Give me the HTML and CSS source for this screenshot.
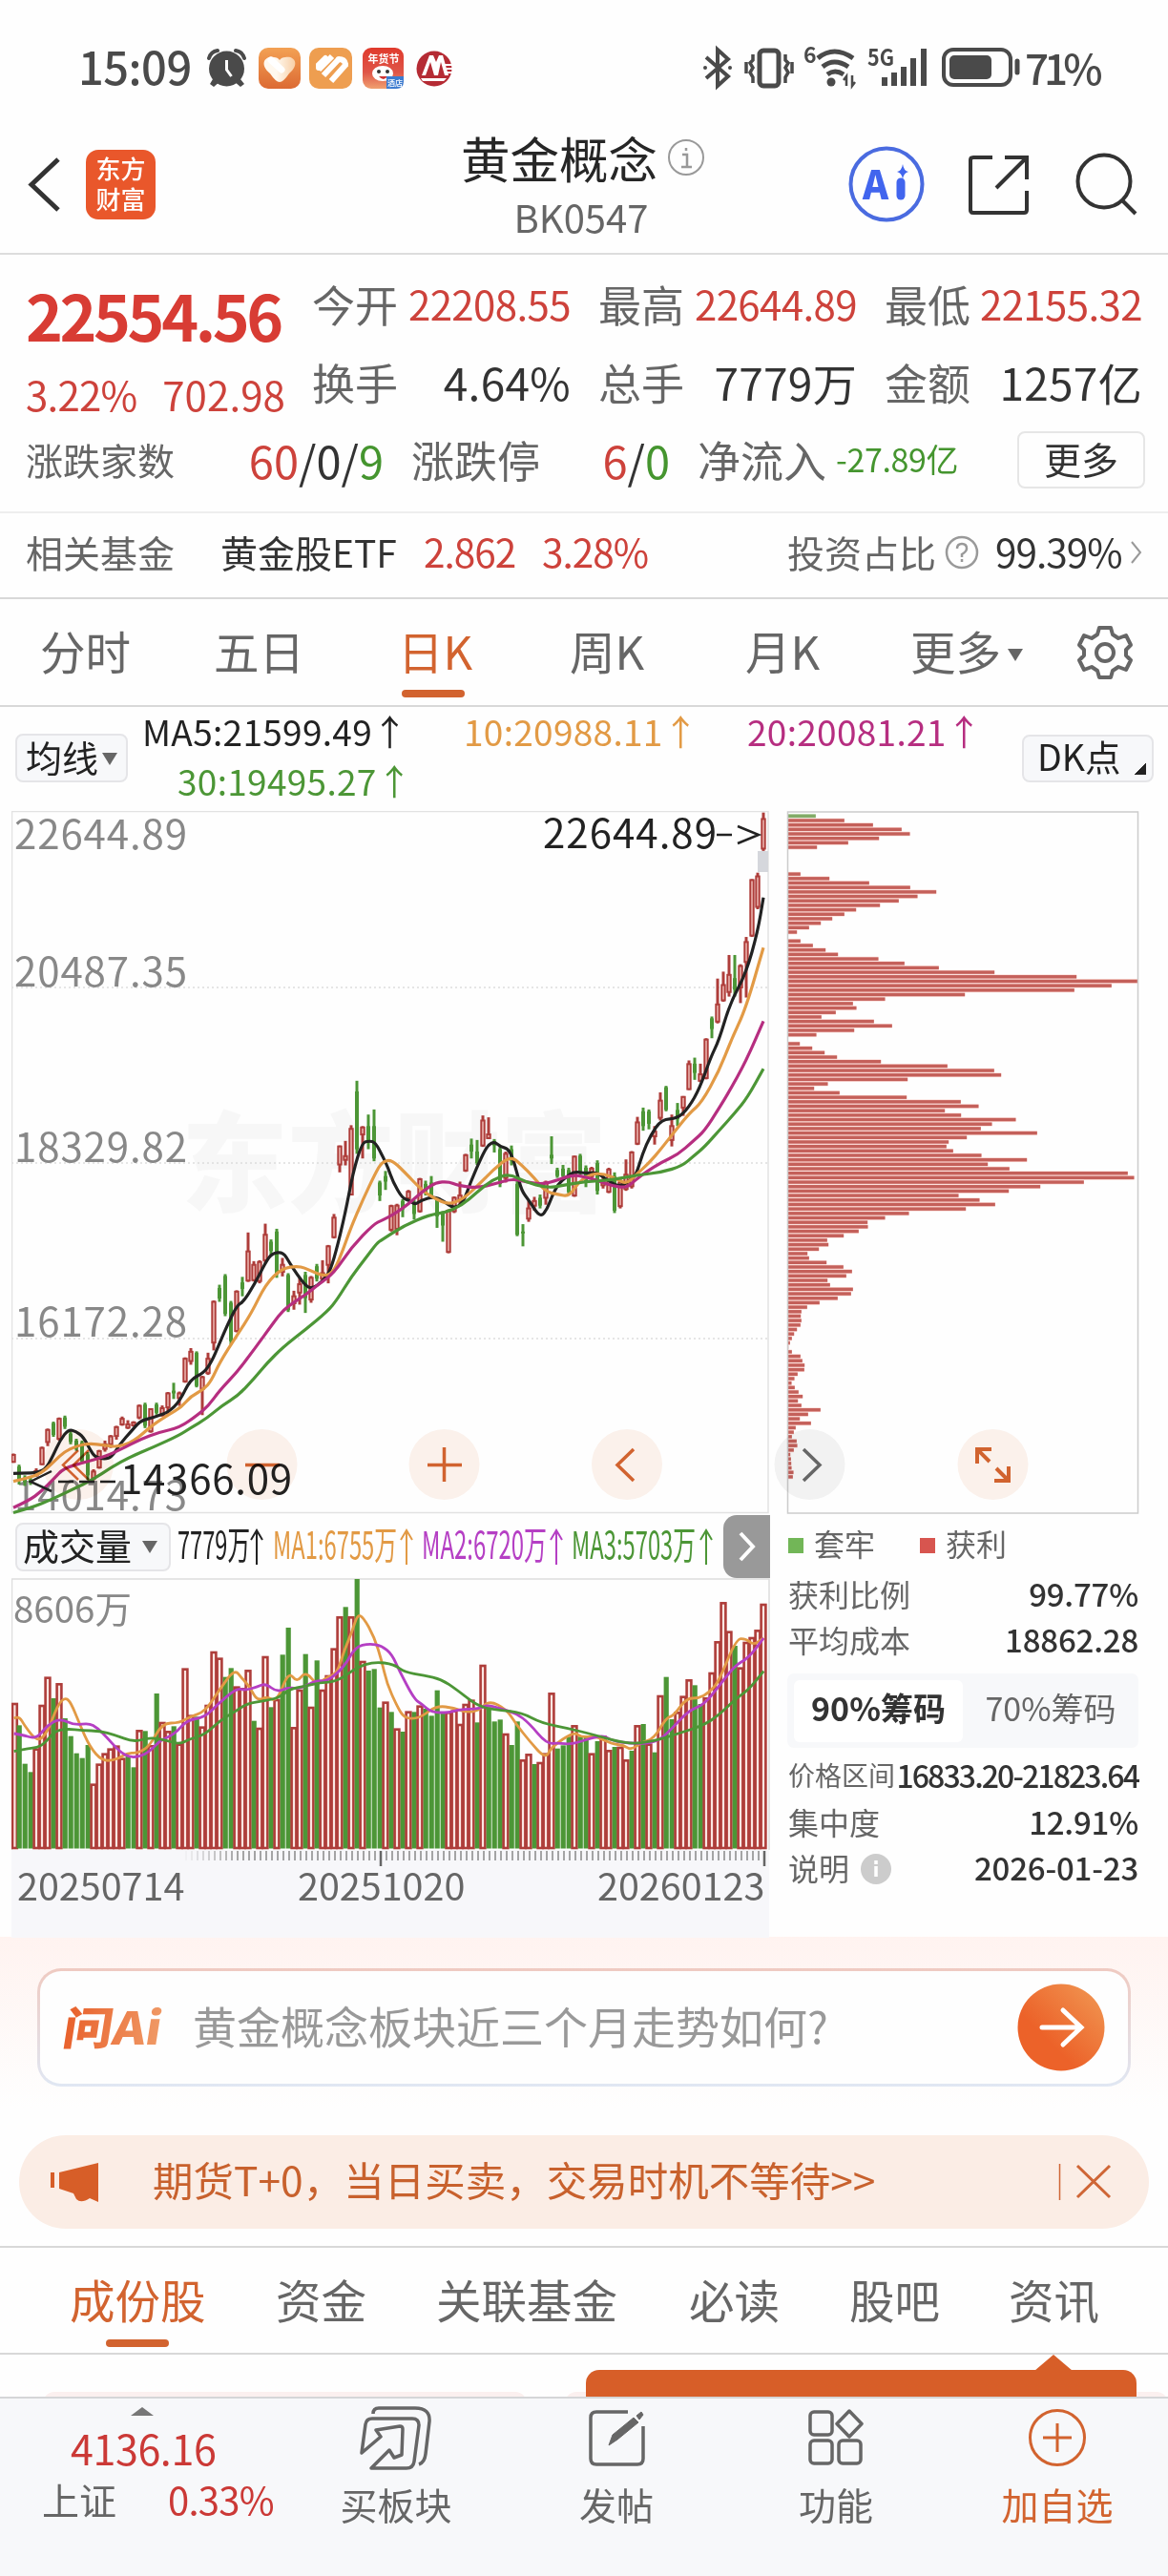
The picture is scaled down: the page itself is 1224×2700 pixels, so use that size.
FILE: index.html
```html
<!DOCTYPE html>
<html lang="zh-CN">
<head>
<meta charset="utf-8">
<title>黄金概念 BK0547</title>
<link rel="stylesheet" href="styles.css">
</head>
<body>
<header class="status">
  <span class="clock">15:09</span>
  <svg class="status-apps" width="262" height="50" viewBox="214 47 262 50">
    <defs>
      <linearGradient id="appA" x1="0" y1="0" x2="0" y2="1"><stop offset="0" stop-color="#f3a154"/><stop offset="1" stop-color="#dc6a33"/></linearGradient>
      <linearGradient id="heart" x1="0" y1="0" x2="1" y2="0"><stop offset=".4" stop-color="#fff8ee"/><stop offset="1" stop-color="#f8cfa6"/></linearGradient>
      <linearGradient id="appC" x1="0" y1="0" x2="0" y2="1"><stop offset="0" stop-color="#e03a2c"/><stop offset=".6" stop-color="#df5548"/><stop offset="1" stop-color="#f0a070"/></linearGradient>
    </defs>
    <g fill="#4a4a4a"><circle cx="237.500" cy="72" r="18.500"/><path d="M223 83l-3 5 4 3 7-6zM252 83l4 5-4 3-7-6z"/></g>
    <path d="M219 61q2-7 9-8M256 61q-2-7-9-8" fill="none" stroke="#4a4a4a" stroke-width="4" stroke-linecap="round"/>
    <path d="M237.500 63v10l5 7" fill="none" stroke="#fff" stroke-width="3"/>
    <rect x="271" y="50" width="44" height="43" rx="10" fill="url(#appA)"/>
    <path d="M293 86q-4 0-10-9c-12-10-5-19 4-17q4 0 6 3q2-3 6-3c9-2 16 7 4 17q-6 9-10 9z" fill="url(#heart)"/>
    <path d="M284 63l11 10" stroke="#fff" stroke-width="7" stroke-linecap="round"/>
    <rect x="324" y="50" width="45" height="43" rx="10" fill="#ee9e50"/>
    <g fill="none" stroke="#fff" stroke-width="6"><path d="M334 73l14-14M339 79l16-17M347 85l16-18"/><path d="M334 71v-3l7-7M355 62q6 0 7 5" stroke-linecap="round"/></g>
    <rect x="380" y="50" width="43" height="43" rx="9" fill="url(#appC)"/>
    <text x="402" y="66" font-size="11" font-weight="700" fill="#fff" text-anchor="middle">年货节</text>
    <ellipse cx="401" cy="77" rx="11" ry="8" fill="#fff"/><circle cx="397" cy="75" r="2" fill="#333"/><circle cx="406" cy="75" r="2" fill="#333"/><path d="M397 80q5 6 9 0z" fill="#c33"/>
    <path d="M405 80h18v5q0 8-8 8h-10z" fill="#3c7bd0"/><text x="414" y="90" font-size="8" fill="#fff" text-anchor="middle">酒店</text>
    <circle cx="455" cy="72" r="18.500" fill="#b52b34"/><path d="M442 79l8-21h4l3 7 3-7h4l6 21h-4l-4-14-3 14h-4l-4-14-5 14zM441 82h27l-3 3h-22zM466 67h8v2h-8zM468 71h6v2h-6zM469 75h5v2h-5z" fill="#fff"/>
  </svg>
  <svg class="status-sys" width="340" height="54" viewBox="732 45 340 54" fill="none" stroke="#4a4a4a" stroke-width="4">
    <path d="M740 60l23 20-11 10V52l11 10-23 20"/><circle cx="739" cy="71" r="2" fill="#4a4a4a" stroke="none"/><circle cx="765" cy="71" r="2" fill="#4a4a4a" stroke="none"/>
    <rect x="796" y="53" width="20" height="37" rx="4" stroke-width="5"/><path d="M789 57v6l-3 3 3 5-3 5 3 5v6M823 57v6l3 3-3 5 3 5-3 5v6M782 65v12M830 65v12" stroke-width="3.500"/>
    <path d="M857 61q17-14 37 0M862 70q12-10 27 0M867 78q8-6 17 0" stroke-width="5"/><circle cx="871" cy="86" r="4.500" fill="#4a4a4a" stroke="none"/>
    <path d="M887 90V80l-3 4M893 79v11l3-4" stroke-width="2.500"/>
    <text x="842" y="66" font-size="23" font-weight="700" fill="#4a4a4a" stroke="none">6</text>
    <text x="909" y="69" font-size="24" font-weight="700" fill="#4a4a4a" stroke="none" textLength="28" lengthAdjust="spacingAndGlyphs">5G</text>
    <path d="M927 90v-9M937 90V76M947 90V70M957 90V61M968 90V51" stroke-width="6"/>
    <rect x="989" y="52" width="70" height="37" rx="10" stroke-width="4"/><rect x="995" y="58" width="44" height="25" rx="5" fill="#4a4a4a" stroke="none"/><path d="M1066 64v12" stroke-width="5" stroke-linecap="round"/>
  </svg>
  <span class="battery">71%</span>
</header>

<nav class="head">
  <svg class="back" width="36" height="60" viewBox="28 164 36 60"><path d="M61 167L33 193.500L61 220" fill="none" stroke="#333" stroke-width="5"/></svg>
  <div class="brand"><span>东方</span><span>财富</span></div>
  <div class="title">
    <div class="title-line"><h1>黄金概念</h1><svg width="40" height="40" viewBox="0 0 40 40" fill="none" stroke="#999" stroke-width="2"><circle cx="20" cy="20" r="18"/><path d="M16 17h5v12M15 30h11M20 10v3" stroke-width="2.500"/></svg></div>
    <span class="code">BK0547</span>
  </div>
  <svg class="head-icons" width="304" height="84" viewBox="888 151 304 84" fill="none" stroke="#333" stroke-width="4">
    <circle cx="929" cy="193" r="37.500" stroke="#4a6be0"/>
    <text x="904" y="209" font-size="41" font-weight="900" fill="#4165ee" stroke="none">A</text><path d="M944 191v14" stroke="#4165ee" stroke-width="9" stroke-linecap="round"/>
    <path d="M946 172q1 7 6 8q-5 1-6 8q-1-7-6-8q5-1 6-8z" fill="#4165ee" stroke="none"/>
    <path d="M1040 165h-20q-3 0-3 3v52q0 3 3 3h53q3 0 3-3v-20M1053 165h23v23M1076 165l-32 32"/>
    <circle cx="1157" cy="190" r="27.500"/><path d="M1176 210l14 14"/>
  </svg>
</nav>

<section class="quote">
  <div class="price"><strong>22554.56</strong><div class="delta"><span>3.22%</span><span>702.98</span></div></div>
  <div class="cell"><label>今开</label><b class="up">22208.55</b></div>
  <div class="cell"><label>最高</label><b class="up">22644.89</b></div>
  <div class="cell"><label>最低</label><b class="up">22155.32</b></div>
  <div class="cell"><label>换手</label><b class="big">4.64%</b></div>
  <div class="cell"><label>总手</label><b class="big">7779万</b></div>
  <div class="cell"><label>金额</label><b class="big">1257亿</b></div>
  <div class="breadth">
    <div class="cell"><label class="small">涨跌家数</label><b class="big count"><i class="up">60</i>/0/<i class="down">9</i></b></div>
    <div class="cell"><label>涨跌停</label><b class="big count"><i class="up">6</i>/<i class="down">0</i></b></div>
    <div class="cell"><label>净流入</label><b class="flow down">-27.89亿</b></div>
    <button class="more">更多</button>
  </div>
</section>

<section class="fund">
  <span class="muted">相关基金</span><span>黄金股ETF</span><span class="up num">2.862</span><span class="up num">3.28%</span>
  <span class="muted">投资占比</span>
  <svg width="36" height="36" viewBox="0 0 36 36" fill="none" stroke="#999" stroke-width="2.500"><circle cx="18" cy="18" r="16"/><path d="M13 14q0-5 5-5t5 5q0 3-5 6v3M18 25v3"/></svg>
  <span class="num">99.39%</span>
  <svg width="14" height="28" viewBox="0 0 14 28"><path d="M2 3l9 11-9 11" fill="none" stroke="#999" stroke-width="2"/></svg>
</section>

<nav class="periods">
  <span>分时</span><span>五日</span><span class="on">日K</span><span>周K</span><span>月K</span><span>更多<i class="tri"></i></span>
  <svg width="60" height="60" viewBox="-30 -30 60 60" fill="none" stroke="#666" stroke-width="4" stroke-linejoin="round"><path d="M-6-26H6L8-19L14-15L22-18L27-8L22-3V3L27 8L22 18L14 15L8 19L6 26H-6L-8 19L-14 15L-22 18L-27 8L-22 3V-3L-27-8L-22-18L-14-15L-8-19Z"/><circle r="9"/></svg>
</nav>

<section class="averages">
  <button class="pick">均线<i class="tri"></i></button>
  <div class="ma"><span>MA5:21599.49↑</span><span class="c10">10:20988.11↑</span><span class="c20">20:20081.21↑</span><span class="c30">30:19495.27↑</span></div>
  <button class="dk">DK点</button>
</section>

<main class="charts">
  <div class="left">
    <svg class="kline" id="kline" width="795" height="738" viewBox="12 849 795 738">
      <text x="190" y="1260" font-size="114" font-weight="900" fill="#f7f7f7" textLength="446" lengthAdjust="spacingAndGlyphs">东方财富</text>
      <g stroke="#ddd" stroke-width="1.500" stroke-dasharray="2 3"><path d="M12 1034H805M12 1218H805M12 1402H805"/></g>
      <rect x="12.500" y="849.500" width="792.500" height="735" fill="none" stroke="#e2e2e2" stroke-width="1.500"/>
      <g font-size="42" fill="#888"><text x="15" y="889" textLength="181">22644.89</text><text x="15" y="1033" textLength="181">20487.35</text><text x="15" y="1217" textLength="181">18329.82</text><text x="15" y="1400" textLength="181">16172.28</text><text x="15" y="1582" textLength="181">14014.73</text></g>
      <rect x="794" y="891" width="11" height="22" fill="#d5d7dc"/>
      <g id="candles"></g><g id="means" fill="none" stroke-width="3.200" stroke-linejoin="round"></g>
      <text x="569" y="888" font-size="42" fill="#222" textLength="182">22644.89</text><path d="M751 874h16M773 865l22 9-22 9" fill="none" stroke="#222" stroke-width="2.500"/>
      <path d="M54 1541L32 1552L54 1562" fill="none" stroke="#222" stroke-width="2.500"/><path d="M61 1552h60" stroke="#222" stroke-width="2.500" stroke-dasharray="16 6"/>
      <text x="126" y="1565" font-size="42" fill="#222" textLength="180">14366.09</text>
    </svg>
    <div class="vol-head">
      <button class="pick wide">成交量<i class="tri"></i></button>
      <svg width="575" height="66" viewBox="183 1587 575 66" font-size="40"><text x="186" y="1633" fill="#222" textLength="76" lengthAdjust="spacingAndGlyphs">7779万</text><text x="286" y="1633" fill="#e29a45" textLength="130" lengthAdjust="spacingAndGlyphs">MA1:6755万</text><text x="442" y="1633" fill="#b53fc4" textLength="131" lengthAdjust="spacingAndGlyphs">MA2:6720万</text><text x="599" y="1633" fill="#4c9636" textLength="130" lengthAdjust="spacingAndGlyphs">MA3:5703万</text>
        <g fill="none" stroke-width="2"><path stroke="#222" d="M269 1639v-36M263 1613l6-10 6 10"/><path stroke="#e29a45" d="M426 1639v-36M420 1613l6-10 6 10"/><path stroke="#b53fc4" d="M583 1639v-36M577 1613l6-10 6 10"/><path stroke="#4c9636" d="M740 1639v-36M734 1613l6-10 6 10"/></g></svg>
      <span class="next"><svg width="24" height="36" viewBox="0 0 24 36"><path d="M5 4l13 14L5 32" fill="none" stroke="#fff" stroke-width="4"/></svg></span>
    </div>
    <svg class="volume" width="795" height="377" viewBox="12 1653 795 377">
      <rect x="12" y="1938" width="794" height="92" fill="#f7f7fa"/>
      <path d="M12 1654H806V1938M12.500 1654V1938" fill="none" stroke="#ddd" stroke-width="1.500"/>
      <g id="bars"></g><g id="volmeans" fill="none" stroke-width="2.800" stroke-linejoin="round"></g>
      <text x="14" y="1700" font-size="38.500" fill="#888">8606万</text>
      <g id="ticks" stroke="#888" stroke-width="1.500"></g><path d="M399 1939v16M801 1939v16" stroke="#666" stroke-width="2.500"/>
      <g font-size="39.500" fill="#666"><text x="18" y="1991">20250714</text><text x="312" y="1991">20251020</text><text x="626" y="1991">20260123</text></g>
    </svg>
  </div>
  <div class="right">
    <svg width="417" height="738" viewBox="807 849 417 738"><g id="chips"></g><rect x="825.500" y="850" width="367" height="735" fill="none" stroke="#ccc" stroke-width="1.500"/></svg>
    <div class="stats">
      <div class="legend"><i class="sq g"></i>套牢<i class="sq r"></i>获利</div>
      <div class="stat"><span>获利比例</span><b>99.77%</b></div>
      <div class="stat"><span>平均成本</span><b>18862.28</b></div>
      <div class="seg"><b>90%筹码</b><span>70%筹码</span></div>
      <div class="stat tight"><span>价格区间</span><b>16833.20-21823.64</b></div>
      <div class="stat"><span>集中度</span><b>12.91%</b></div>
      <div class="stat"><span>说明<svg width="34" height="34" viewBox="0 0 34 34"><circle cx="17" cy="17" r="16" fill="#ccc"/><path d="M17 14v11M17 8v4" stroke="#fff" stroke-width="3.500"/></svg></span><b>2026-01-23</b></div>
    </div>
  </div>
  <svg class="tools" width="1040" height="76" viewBox="44 1497 1040 76" fill="none" stroke="#d2632f" stroke-width="3.500">
    <g fill="#fcf2ec" stroke="none"><circle cx="82" cy="1535" r="37"/><circle cx="274.500" cy="1535" r="37"/><circle cx="465.500" cy="1535" r="37"/><circle cx="657" cy="1535" r="37"/><circle cx="1040.500" cy="1535" r="37"/></g>
    <circle cx="848.500" cy="1535" r="37" fill="#f3f3f3" stroke="none"/>
    <path d="M82 1520L66 1535.500L82 1551M93 1520L77 1535.500L93 1551" stroke-width="2.500"/>
    <path d="M257 1535.500h36M448 1535.500h36M465.500 1517v36M664 1519L647 1535.500L664 1552"/>
    <path d="M842 1519L859 1535.500L842 1552" stroke="#666"/>
    <path d="M1024 1534v-15h15M1024 1519l13 13M1057 1537v15h-15M1057 1552l-13-13" stroke-width="4"/>
  </svg>
</main>

<section class="ask">
  <div class="ask-box">
    <svg width="108" height="50" viewBox="63 2100 108 50"><defs><linearGradient id="askFill" x1="0" x2="1"><stop offset="0" stop-color="#e8602b"/><stop offset="1" stop-color="#f09a66"/></linearGradient></defs><text x="0" y="0" transform="translate(64 2143) skewX(-9)" font-size="47" font-weight="900" fill="url(#askFill)" textLength="103" lengthAdjust="spacingAndGlyphs">问Ai</text></svg>
    <span>黄金概念板块近三个月走势如何?</span>
    <svg class="go" width="92" height="92" viewBox="0 0 92 92"><defs><linearGradient id="goFill" x1="0" y1="1" x2="1" y2="0"><stop offset=".35" stop-color="#ec6229"/><stop offset="1" stop-color="#f19a55"/></linearGradient></defs><circle cx="46" cy="46" r="45.500" fill="url(#goFill)"/><path d="M26 46h40M48 28l19 18-19 18" fill="none" stroke="#fff" stroke-width="5" stroke-linecap="round"/></svg>
  </div>
</section>

<section class="promo">
  <svg width="54" height="46" viewBox="52 2263 54 46" fill="#d75e28"><path d="M53 2276h4v16h-4zM62 2276L103 2266V2307L94 2303Q85 2309 80 2304L77 2298L62 2293Z"/></svg>
  <span>期货T+0，当日买卖，交易时机不等待&gt;&gt;</span>
  <svg width="60" height="42" viewBox="1107 2266 60 42" fill="none" stroke="#cf6636"><path d="M1109.500 2268v38" stroke-width="1.500"/><path d="M1128 2270l34 33M1162 2270l-34 33" stroke-width="3"/></svg>
</section>

<nav class="sections"><span class="on">成份股</span><span>资金</span><span>关联基金</span><span>必读</span><span>股吧</span><span>资讯</span></nav>
<div class="peek"><i class="card"></i><i class="card"></i><div class="bubble"></div></div>

<footer class="dock">
  <div class="index"><i class="caret"></i><b>4136.16</b><div><span>上证</span><em>0.33%</em></div></div>
  <div class="act"><svg width="78" height="70" viewBox="374 2521 78 70" fill="none" stroke="#666" stroke-width="3.500" stroke-linejoin="round"><path d="M389 2531q0-6 6-6h38q16 0 15 14l-4 34q-1 9-7 11"/><path d="M377 2572L381 2542q1-6 7-6h42q7 0 7 7l-5 38q-1 7-8 7h-37l19-19 5 8 8-3 1-27q0-3-3-3l-25 4 5 7z"/></svg><span>买板块</span></div>
  <div class="act"><svg width="78" height="70" viewBox="606 2521 78 70" fill="none" stroke="#666" stroke-width="3.500"><path d="M657 2529h-33q-6 0-6 6v43q0 6 6 6h43q6 0 6-6v-34"/><path d="M637 2564l4-11 22-18 5 5-22 18z" fill="#666" stroke-width="1"/><path d="M666 2533l5-4 2 3-4 5z" fill="#666" stroke-width="1"/></svg><span>发帖</span></div>
  <div class="act"><svg width="78" height="70" viewBox="838 2521 78 70" fill="none" stroke="#666" stroke-width="3.500"><rect x="850" y="2529" width="23" height="24" rx="4"/><rect x="850" y="2559" width="23" height="24" rx="4"/><rect x="880" y="2559" width="23" height="24" rx="4"/><path d="M891 2528l13 13.500-13 13.500-13-13.500z" stroke-linejoin="round"/></svg><span>功能</span></div>
  <div class="act on"><svg width="78" height="70" viewBox="1069 2521 78 70" fill="none" stroke="#d2632f" stroke-width="3"><circle cx="1108" cy="2556" r="28.500"/><path d="M1093 2556h30M1108 2541v30"/></svg><span>加自选</span></div>
</footer>
<script src="script.js"></script>
</body>
</html>
```

FILE: styles.css
```css
* { box-sizing: border-box; }
body { margin: 0; width: 1224px; height: 2700px; overflow: hidden; background: #fefefe; color: #333; font-family: "Noto Sans CJK SC", "Noto Sans", sans-serif; line-height: 1; white-space: nowrap; }
svg { display: block; flex: none; }
button { font: inherit; color: inherit; background: none; border: 0; padding: 0; }
b, i, em, h1 { font-weight: 400; font-style: normal; margin: 0; }
.up { color: #cd423b; }
.down { color: #45952f; }
.tri { display: inline-block; border: 8px solid transparent; border-top: 13px solid #666; border-bottom: 0; }

.status { height: 110px; display: flex; align-items: flex-start; padding: 47px 0 0 82px; color: #4a4a4a; font-size: 47px; font-weight: 500; }
.clock { width: 132px; line-height: 44px; letter-spacing: -.5px; }
.status-apps { margin-right: 256px; }
.status-sys { margin-top: -2px; }
.battery { font-size: 44px; line-height: 46px; letter-spacing: -5px; padding-left: 2px; }

.head { height: 157px; display: flex; border-bottom: 2px solid #ddd; }
.back { margin: 54px 26px 0 28px; }
.brand { width: 73px; height: 73px; margin-top: 47px; border-radius: 13px; background: #e9572b; color: #fff; font-size: 26px; font-weight: 500; line-height: 32px; padding-top: 3px; text-align: center; display: flex; flex-direction: column; }
.title { flex: none; width: 530px; margin-left: 161px; margin-right: 34px; display: flex; flex-direction: column; align-items: center; }
.title-line { display: flex; align-items: center; gap: 10px; margin: 29px 0 0 44px; height: 52px; }
.title h1 { font-size: 51.500px; line-height: 50px; color: #262626; }
.code { font-size: 40px; color: #666; line-height: 44px; margin-top: 14px; margin-left: 40px; }
.head-icons { margin-top: 41px; }

.quote { height: 271px; padding: 10px 27px 0; display: grid; grid-template: 82px 82px 80px / 271px 271px 271px 270px; column-gap: 29px; border-bottom: 2px solid #eee; }
.price { grid-row: span 2; color: #cd423b; }
.price strong { display: block; font-size: 66px; line-height: 104px; font-weight: 700; color: #d83c34; letter-spacing: -3.400px; }
.delta { display: flex; font-size: 42px; line-height: 64px; width: 272px; justify-content: space-between; letter-spacing: -.8px; }
.delta span + span { letter-spacing: .1px; }
.cell { display: flex; align-items: center; justify-content: space-between; }
.cell label { font-size: 45px; color: #666; }
.cell label.small { font-size: 39px; }
.cell b { font-size: 42px; letter-spacing: -.6px; }
.cell b.big { font-size: 46px; letter-spacing: .3px; }
.cell b.count { font-size: 47px; letter-spacing: 0; }
.cell b.flow { font-size: 34px; letter-spacing: -.4px; }
.breadth { grid-column: 1 / -1; display: grid; grid-template-columns: 375px 271px 273px 134px; column-gap: 29px; }
.breadth .more { margin: 11px 0 0 33px; width: 134px; height: 60px; border: 2px solid #e6e6e6; border-radius: 8px; font-size: 39px; line-height: 48px; padding-bottom: 4px; }

.fund { height: 90px; border-bottom: 2px solid #d8d8d8; padding: 0 0 7px 27px; display: grid; align-items: center; grid-template-columns: 204px 213px 124px 257px 165px 53px 141px 14px; font-size: 39px; }
.fund .num { font-size: 40.500px; letter-spacing: -1px; }
.muted { color: #666; }

.periods { height: 113px; border-bottom: 2px solid #d8d8d8; padding: 0 0 4px 42px; display: grid; align-items: center; grid-template-columns: 182px 193px 180px 184px 173px 174px 60px; font-size: 47.500px; color: #666; }
.periods .tri { vertical-align: 9px; margin-left: 7px; }
.periods svg { margin-top: 4px; }
.on { color: #d2632f; }
.periods .on, .sections .on { position: relative; }
.periods .on::after, .sections .on::after { content: ""; position: absolute; left: 4px; top: 65px; width: 66px; height: 8px; border-radius: 4px; background: #d2632f; }

.averages { height: 109px; display: flex; padding-left: 16px; font-size: 38px; color: #222; }
.pick { width: 118px; height: 51px; margin-top: 28px; background: #f7f8fa; border: 2px solid #e5e5e8; border-radius: 8px; text-align: left; padding: 0 0 4px 9px; line-height: 41px; }
.pick .tri { vertical-align: 7px; margin-left: 4px; }
.ma { width: 921px; margin-left: 15px; display: grid; grid-template: 52px 52px / 337px 297px 287px; font-size: 37px; line-height: 50px; letter-spacing: .3px; }
.ma .c10 { color: #e29a45; }
.ma .c20 { color: #b62e80; }
.ma .c30 { color: #4c9636; padding-left: 37px; }
.dk { width: 138px; height: 50px; margin: 29px 0 0 1px; border: 2px solid #e5e5e8; border-radius: 8px; background: linear-gradient(135deg, transparent 50%, #222 50%) 115px 27px / 13px 13px no-repeat, #f7f8fa; font-size: 37.500px; line-height: 40px; text-align: left; padding: 0 0 6px 14px; }

.charts { position: relative; display: grid; grid-template-columns: 795px 417px; padding-left: 12px; height: 1180px; }
.tools { position: absolute; left: 44px; top: 647px; mix-blend-mode: multiply; }
.vol-head { height: 66px; display: flex; padding-left: 4px; font-size: 38px; color: #222; }
.pick.wide { width: 163px; margin: 8px 4px 0 0; padding: 0 0 6px 6px; }
.pick.wide .tri { margin-left: 11px; }
.next { width: 49px; height: 66px; border-radius: 14px 0 0 14px; background: #999; display: grid; place-items: center; flex: none; }
.stats { padding: 0 31px 0 18px; color: #666; font-size: 32px; }
.legend { height: 58px; display: flex; align-items: center; }
.sq { width: 16px; height: 16px; margin: 5px 11px 0 1px; }
.sq.g { background: #72b657; }
.sq.r { background: #d7554f; margin-left: 47px; }
.stat { height: 48px; padding-left: 1px; display: flex; align-items: center; justify-content: space-between; }
.stat span { display: flex; align-items: center; gap: 11px; }
.stat svg { margin-top: 4px; }
.stat b { font-size: 33px; font-weight: 500; color: #333; letter-spacing: -.2px; }
.stat.tight { height: 50px; font-size: 28px; margin-top: 3px; }
.stat.tight b { font-size: 32px; letter-spacing: -1.900px; }
.seg { height: 78px; margin: 12px 0 0; padding: 7px; border-radius: 7px; background: #f7f8fa; display: grid; grid-template-columns: 177px 177px; text-align: center; font-size: 34px; line-height: 58px; }
.seg b { background: #fff; border-radius: 6px; font-weight: 600; color: #333; height: 65px; letter-spacing: 0; }
.seg span { padding-left: 7px; }

.ask { height: 208px; padding: 33px 39px 0; background: linear-gradient(#fff3f0, #fefefe 86%); }
.ask-box { height: 124px; border: 3px solid transparent; border-radius: 25px; background: linear-gradient(#fefefe, #fefefe) padding-box, linear-gradient(#efcac1, #e0e7f3) border-box; display: flex; align-items: center; padding: 0 24px 0 21px; font-size: 46px; color: #999; }
.ask-box span { margin: -6px 0 0 31px; }
.go { margin-left: auto; }

.promo { height: 98px; margin: 0 20px; border-radius: 49px; background: #fbede5; display: flex; align-items: center; padding: 0 36px 0 32px; color: #c8612d; font-size: 42.500px; }
.promo span { margin: -5px auto 0 54px; }

.sections { height: 114px; margin-top: 18px; border-top: 2px solid #d8d8d8; border-bottom: 2px solid #d8d8d8; padding: 0 0 2px 73px; display: grid; align-items: center; grid-template-columns: 216px 168px 265px 168px 167px 95px; font-size: 47.500px; color: #666; }
.sections .on::after { left: 38px; top: 66px; }
.peek { position: relative; height: 44px; overflow: hidden; display: flex; gap: 40px; padding: 39px 0 0 45px; }
.card { width: 507px; height: 20px; flex: none; border-radius: 12px 12px 0 0; background: #fbf0ef; }
.card + .card { width: 632px; }
.bubble { position: absolute; left: 614px; top: 16px; width: 577px; height: 60px; border-radius: 14px; background: #d75e28; }
.peek::after { content: ""; position: absolute; left: 1084px; top: 0; border: 20px solid transparent; border-top: 0; border-bottom: 17px solid #d75e28; }

.dock { height: 188px; border-top: 2px solid #d5d6d8; background: #f7f8fa; display: grid; grid-template-columns: 298px 234px 228px 232px 232px; color: #666; font-size: 39px; }
.index { padding: 9px 0 0 44px; }
.index b { display: block; font-size: 43px; line-height: 60px; letter-spacing: -.4px; color: #cb3936; padding-left: 30px; margin-top: 3px; }
.index div { display: flex; justify-content: space-between; width: 243px; line-height: 48px; }
.index em { color: #cb3936; font-size: 40px; letter-spacing: -.7px; }
.caret { display: block; margin-left: 93px; width: 0; border: 12px solid transparent; border-top: 0; border-bottom: 9px solid #777; }
.act { display: flex; flex-direction: column; align-items: center; padding: 6px 0 0; line-height: 69px; }
.act.on { color: #d2632f; }
```

FILE: script.js
```js
const NS = 'http://www.w3.org/2000/svg';
const RED = '#ae3d3a', GREEN = '#4c9636';
function add(id, tag, attrs) {
  const el = document.createElementNS(NS, tag);
  for (const k in attrs) el.setAttribute(k, attrs[k]);
  document.getElementById(id).appendChild(el);
}

// one entry per session: colour, high, body top, body bottom, low
const sessions = `r1408,1411,1426,1428 g1432,1436,1465,1475 g1455,1460,1470,1478 g1458,1464,1472,1476 r1440,1446,1455,1458 r1393,1396,1431,1433 r1354,1357,1383,1392 g1339,1342,1368,1372 r1330,1333,1376,1380 g1326,1330,1350,1355
g1360,1365,1383,1388 g1376,1380,1398,1402 g1380,1384,1425,1430 g1405,1410,1455,1465 r1442,1447,1462,1466 r1400,1403,1438,1441 r1380,1388,1398,1404 r1368,1371,1388,1396 r1348,1351,1370,1378 r1328,1333,1345,1348
r1336,1345,1352,1355 r1338,1341,1347,1350 r1302,1305,1330,1334 g1298,1302,1348,1353 r1310,1312,1360,1363 g1298,1302,1320,1324 r1304,1310,1325,1328 r1275,1278,1308,1325 g1255,1272,1278,1290 r1274,1278,1288,1305
r1200,1203,1252,1255 r1180,1188,1208,1216 g1187,1190,1262,1265 r1240,1243,1268,1325 r1190,1203,1234,1238 r1077,1080,1168,1185 g1043,1050,1073,1080 g1020,1024,1106,1111 g1078,1082,1165,1172 r1055,1058,1143,1146
g1026,1038,1052,1068 r930,971,1034,1037 r992,1000,1033,1036 r990,994,1035,1040 r911,935,990,996 g945,950,970,978 g922,928,1020,1028 r985,1000,1015,1025 g1018,1022,1098,1102 r1056,1068,1083,1097
r1028,1042,1060,1086 g1015,1022,1072,1104 r1024,1028,1075,1082 g998,1003,1030,1036 r990,1018,1030,1038 r957,960,1000,1040 r890,898,940,943 r742,744,783,800 r732,765,773,785 r698,706,848,850
g602,625,750,760 r700,703,718,770 g675,700,735,750 g664,700,770,776 g818,822,850,862 g797,808,820,838 r870,873,924,928 r868,872,922,936 g858,862,880,897 r838,842,856,862
g860,866,890,902 r812,815,884,887 g818,825,845,850 g808,822,850,855 g855,860,895,920 g884,886,915,950 r880,883,972,975 r852,855,884,888 r820,850,860,872 r760,763,796,799
g727,740,755,770 g730,755,780,784 r677,688,742,745 r681,718,726,728 g728,732,742,757 g742,750,825,832 r755,760,812,822 g742,750,775,785 g812,825,935,938 g912,928,932,960
r862,878,900,907 r853,862,872,883 g848,855,872,878 r818,822,855,870 g722,762,770,782 g790,795,808,812 g784,792,808,812 g790,795,843,850 r764,766,850,853 g760,764,800,808
g785,790,822,832 r788,792,808,815 g774,780,840,848 r805,818,828,835 r790,794,842,845 g800,808,883,888 r815,822,873,878 r772,805,836,840 r754,757,830,835 r680,692,738,741
g660,668,700,710 g664,668,695,707 r700,712,722,740 r627,645,682,688 g613,616,665,668 r675,700,730,744 g650,665,685,700 r635,637,660,678 r558,566,620,622 g552,565,585,600
r565,588,602,605 r510,513,596,599 g463,467,490,510 r381,437,474,478 r366,395,428,431 r330,373,410,420 g330,380,405,420 r350,354,400,434 r291,302,345,422 r166,168,288,291
r152,160,226,231 r22,36,100,105`.split(/\s+/);
const priceY = v => 840 + v / 2.063;
sessions.forEach((s, i) => {
  const [hi, top, bot, lo] = s.slice(1).split(',').map(v => priceY(+v));
  const x = 14 + 6 * i, red = s[0] === 'r';
  add('candles', 'path', { d: `M${x} ${hi}V${lo}`, stroke: red ? RED : GREEN, 'stroke-width': 3 });
  add('candles', 'rect', { x: x - (red ? 1.7 : 2), y: top, width: red ? 3.4 : 4, height: Math.max(bot - top, 1), fill: red ? '#f3c4be' : GREEN, stroke: red ? RED : 'none', 'stroke-width': 2 });
});

function curve(points) {
  const p = points.trim().split(/\s+/).map(t => t.split(',').map(Number));
  let d = `M${p[0]}`;
  for (let i = 1; i < p.length - 1; i++) d += `Q${p[i]} ${(p[i][0] + p[i + 1][0]) / 2},${(p[i][1] + p[i + 1][1]) / 2}`;
  return d + `L${p[p.length - 1]}`;
}
function drawCurves(id, map, fx, fy) {
  for (const c in map) {
    const pts = map[c].trim().split(/\s+/).map(t => { const [a, b] = t.split(',').map(Number); return `${fx(a)},${fy(b)}`; }).join(' ');
    add(id, 'path', { d: curve(pts), stroke: c });
  }
}
drawCurves('means', {
  '#222': '42,1451 90,1450 120,1449 145,1440 165,1415 190,1378 215,1356 238,1360 262,1372 285,1402 300,1416 330,1420 352,1415 380,1385 410,1362 440,1338 470,1332 500,1326 530,1318 565,1295 598,1248 640,1234 665,1210 690,1170 715,1130 745,1088 765,1080 800,1042 835,995 855,975 890,972 910,995 935,1022 965,1048 985,1050 1010,1038 1035,1018 1055,975 1085,890 1110,800 1138,736 1160,732 1180,735 1205,768 1220,790 1235,820 1265,856 1285,860 1305,870 1325,860 1365,852 1395,862 1425,878 1455,868 1480,820 1515,765 1535,740 1555,734 1575,745 1595,748 1610,765 1625,800 1640,840 1662,860 1698,898 1720,880 1735,852 1755,825 1780,810 1805,798 1840,802 1875,800 1900,812 1935,828 1960,828 1985,815 2000,805 2020,760 2045,720 2080,685 2130,684 2165,660 2200,618 2235,550 2260,515 2295,435 2345,370 2382,280 2400,206',
  '#e29a45': '42,1468 95,1460 130,1450 160,1432 200,1405 240,1392 280,1386 330,1390 370,1394 420,1382 480,1346 530,1324 570,1308 600,1284 640,1270 665,1250 690,1212 745,1152 790,1105 835,1042 885,1008 940,1002 975,1012 1020,1025 1050,1015 1080,965 1100,925 1140,860 1180,802 1200,778 1230,772 1270,798 1325,838 1365,856 1410,870 1455,858 1500,830 1550,795 1605,764 1640,784 1680,812 1715,842 1755,848 1790,852 1820,820 1860,803 1900,803 1940,815 1970,825 2000,805 2040,780 2080,748 2125,708 2170,670 2205,650 2260,582 2300,512 2345,445 2400,314',
  '#b62e80': '42,1525 90,1510 130,1490 170,1462 200,1440 260,1428 330,1415 400,1392 440,1378 500,1362 565,1352 620,1325 655,1305 690,1272 745,1232 800,1182 860,1125 890,1098 930,1078 960,1065 1000,1043 1050,1018 1105,962 1175,912 1200,904 1240,890 1285,868 1330,840 1370,822 1410,820 1440,828 1500,834 1560,824 1610,814 1650,820 1700,826 1740,820 1800,805 1840,810 1880,818 1920,828 1970,834 2000,815 2030,800 2080,778 2130,762 2180,732 2215,710 2260,662 2290,628 2345,560 2400,473',
  '#4c9636': '42,1536 100,1525 160,1508 230,1485 290,1465 350,1438 410,1415 480,1395 565,1368 600,1352 650,1332 700,1303 750,1282 800,1245 840,1212 890,1178 960,1140 1030,1100 1060,1075 1105,1025 1150,985 1185,953 1200,946 1270,915 1350,892 1400,887 1450,872 1500,843 1550,815 1600,803 1650,820 1720,834 1770,828 1840,820 1920,817 2000,806 2080,800 2145,786 2180,765 2215,745 2260,710 2310,672 2350,638 2400,576'
}, x => x / 3, priceY);

const volumes = 'r612 g682 g803 g829 r755 r618 r530 g597 r550 g660 g716 g770 g785 g744 r866 r803 r770 r755 r746 r785 g780 g814 r697 g700 r745 g582 r672 r700 g685 r740 r503 r650 g655 r686 r618 r450 r470 g530 g502 r560 r565 r508 g668 r690 r465 g625 r600 g460 g375 r688 r570 g458 r624 g478 r570 r525 r440 r340 g310 r340 g222 r480 g510 g505 g626 r608 g640 r692 g702 r638 g640 r620 g630 g652 g572 g640 r640 r635 r678 r615 r602 g673 r492 g625 g670 g664 r708 g744 g670 r790 r772 g804 r798 r770 r580 g755 g745 g718 r682 g718 g720 r770 g732 r715 r760 g750 r750 r790 g762 r682 g678 r740 g767 r588 g530 g663 r640 r590 r538 g556 g615 r595 r516 r418 r295 r386 g432 r500 r420 r405 r382 r300'.split(' ');
const volY = v => 1580 + v / 3;
volumes.forEach((s, i) => {
  const red = s[0] === 'r', x = 14 + 6 * i, y = volY(+s.slice(1));
  add('bars', 'rect', { x: Math.max(x - 2.4, 13), y: red ? y + 1 : y, width: red ? 4.8 : 5.2, height: 1936.5 - y - (red ? 1.5 : 0), fill: red ? '#fbe6e2' : GREEN, stroke: red ? RED : 'none', 'stroke-width': 2.6 });
});
drawCurves('volmeans', {
  '#e29a45': '28,660 38,652 50,685 75,735 95,705 115,620 130,594 142,610 160,680 180,750 205,795 235,790 255,768 275,770 300,748 325,675 360,675 380,655 410,640 440,570 470,505 485,535 500,560 515,605 535,592 555,608 578,512 595,548 612,512 635,555 655,530 675,520 690,445 705,390 716,334 728,342 750,405 765,480 775,550 795,620 808,655 825,662 845,655 875,620 910,628 935,642 960,635 980,604 1015,632 1035,680 1060,730 1093,788 1105,750 1150,702 1165,720 1195,716 1225,740 1250,745 1265,760 1285,735 1310,725 1335,658 1350,652 1375,597 1400,597 1420,580 1440,545 1475,410 1495,410 1510,430 1530,408',
  '#b53fc4': '28,708 45,712 65,722 78,715 95,682 120,660 150,682 178,675 195,690 215,722 240,765 260,783 280,780 300,765 320,730 350,710 375,665 410,658 440,610 475,565 490,572 515,562 532,550 555,578 578,562 600,568 635,540 655,545 690,498 712,435 740,425 765,432 785,458 800,510 830,600 845,615 865,642 900,642 920,632 960,630 975,618 1000,628 1035,645 1060,675 1095,740 1120,738 1145,742 1185,722 1210,714 1225,730 1265,740 1315,738 1345,695 1380,635 1410,618 1440,560 1472,495 1500,470 1530,408',
  '#4c9636': '28,764 50,756 75,752 90,738 110,700 135,693 165,698 200,700 230,712 268,735 300,720 330,728 360,742 380,725 410,712 440,668 475,635 495,614 530,605 560,595 580,568 610,560 640,548 675,545 715,500 750,482 790,490 810,515 850,525 885,538 915,570 960,625 1000,634 1045,642 1085,675 1140,692 1190,712 1260,742 1310,732 1355,710 1410,682 1440,650 1475,598 1500,570 1530,512'
}, x => x / 1.912, volY);
for (let x = 195; x < 800; x += 6) add('ticks', 'path', { d: `M${x} 1939v10`, opacity: Math.min(1, (x - 190) / 60) });

// holding cost distribution, bar lengths from the highest price down
const chips = '88 178 268 358 384 287 190 92 0 0 0 0 0 40 131 256 385 467 408 349 290 215 178 140 104 67 29 1 40 79 119 158 285 367 475 650 908 1102 1018 901 557 306 205 216 151 106 271 328 209 90 0 38 77 116 155 293 502 649 671 377 126 83 163 374 544 600 494 545 717 642 607 784 563 506 499 520 609 752 629 697 1069 1089 931 794 695 537 603 652 560 381 306 251 252 223 176 124 128 98 62 67 122 175 202 184 125 133 205 199 157 100 61 43 41 43 40 29 20 13 7 2 13 40 46 53 52 31 21 12 22 34 47 32 43 103 64 38 73 25 19 13 28 30 19 8 10 11 12 18 16'.split(' ').map(Number);
chips.forEach((w, i) => {
  const y = 852.6 + 4.68 * i;
  if (w) add('chips', 'rect', { x: 825.5, y: y - .6, width: w / 3, height: 4.6, fill: i ? '#fbd3ce' : '#d6e8ce' });
  add('chips', 'rect', { x: 825.5, y, width: w / 3, height: 3.4, fill: i ? '#c4605a' : '#83ab68' });
});
```
